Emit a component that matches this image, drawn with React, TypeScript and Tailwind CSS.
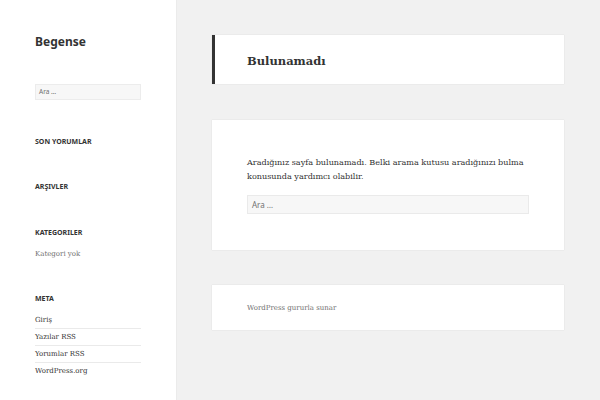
import React from "react";

const sansH = "font-['Noto_Sans','Open_Sans',sans-serif] text-[7px] leading-[10px] font-bold text-[#333]";
const serif = "font-['DejaVu_Serif','Liberation_Serif',serif]";
const card = "w-[352px] bg-white shadow-[0_0_1px_rgba(0,0,0,0.15)]";

export default function App() {
  return (
    <div className="flex w-[600px] h-[400px] overflow-hidden bg-[#f1f1f1]">
      <aside className="w-[176px] shrink-0 bg-white px-[35px] pt-[33px] shadow-[0_0_1px_rgba(0,0,0,0.15)]">
        <div className="font-['Noto_Sans','Open_Sans',sans-serif] text-[12px] leading-[18px] font-bold text-[#333]">Begense</div>
        <div className="mt-[33px] h-[16px] w-[106px] bg-[#f7f7f7] border border-[#ececec] font-['Noto_Sans',sans-serif] text-[6.5px] leading-[14px] pl-[3px] text-[#707070]">Ara …</div>
        <div className={`mt-[37px] ${sansH}`}>SON YORUMLAR</div>
        <div className={`mt-[35px] ${sansH}`}>ARŞIVLER</div>
        <div className={`mt-[36px] ${sansH}`}>KATEGORILER</div>
        <div className={`mt-[10px] ${serif} text-[7px] leading-[12px] text-[#707070]`}>Kategori yok</div>
        <div className={`mt-[34px] ${sansH}`}>META</div>
        <ul className={`mt-[8px] ${serif} text-[7px] text-[#333]`}>
          <li className="h-[17px] leading-[17px] border-b border-[#eaeaea]">Giriş</li>
          <li className="h-[17px] leading-[17px] border-b border-[#eaeaea]">Yazılar RSS</li>
          <li className="h-[17px] leading-[17px] border-b border-[#eaeaea]">Yorumlar RSS</li>
          <li className="h-[17px] leading-[17px]">WordPress.org</li>
        </ul>
      </aside>
      <main className="pl-[36px] pt-[35px] flex flex-col">
        <div className={`${card} h-[49px] border-l-[3px] border-[#333] pl-[32px] flex items-center`}>
          <h1 className={`${serif} text-[11.5px] font-bold text-[#333] leading-[16px] mt-[2px]`}>Bulunamadı</h1>
        </div>
        <div className={`${card} mt-[36px] h-[130px] px-[35px] pt-[35px]`}>
          <p className={`${serif} text-[8.1px] leading-[14px] text-[#333]`}>
            Aradığınız sayfa bulunamadı. Belki arama kutusu aradığınızı bulma konusunda yardımcı olabilir.
          </p>
          <div className="mt-[12px] h-[19px] w-[282px] bg-[#f7f7f7] border border-[#eaeaea] font-['Noto_Sans',sans-serif] text-[8px] leading-[17px] pl-[4px] text-[#707070]">Ara …</div>
        </div>
        <div className={`${card} mt-[35px] h-[45px] pl-[35px] flex items-center`}>
          <span className={`${serif} text-[7px] leading-[12px] text-[#707070]`}>WordPress gururla sunar</span>
        </div>
      </main>
    </div>
  );
}
